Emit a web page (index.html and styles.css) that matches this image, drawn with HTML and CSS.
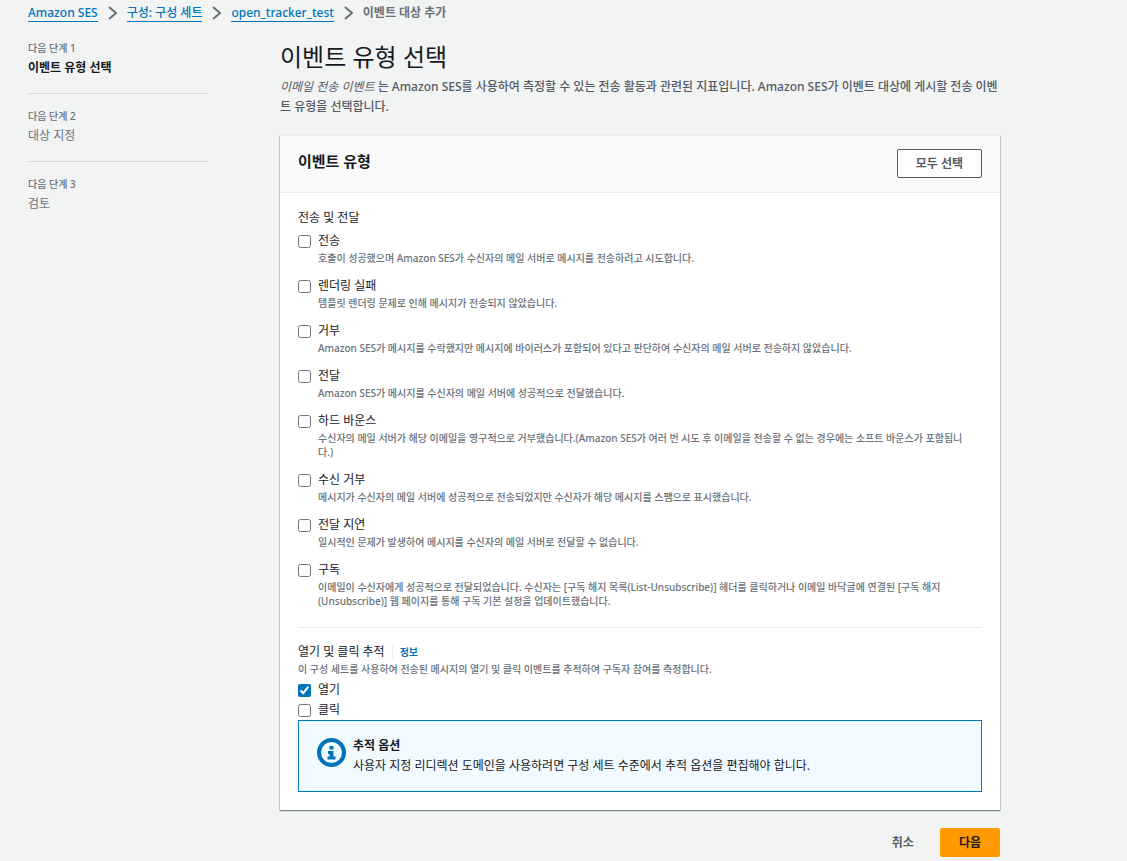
FILE: index.html
```html
<!DOCTYPE html>
<html lang="ko">
<head>
<meta charset="utf-8">
<meta name="viewport" content="width=device-width, initial-scale=1">
<title>이벤트 대상 추가</title>
<link rel="stylesheet" href="styles.css">
</head>
<body>
<nav class="breadcrumb" aria-label="탐색 경로">
  <a href="#">Amazon SES</a>
  <svg class="chevron" viewBox="0 0 9 14" aria-hidden="true"><path d="M1 1l7 6-7 6"/></svg>
  <a href="#">구성: 구성 세트</a>
  <svg class="chevron" viewBox="0 0 9 14" aria-hidden="true"><path d="M1 1l7 6-7 6"/></svg>
  <a href="#">open_tracker_test</a>
  <svg class="chevron" viewBox="0 0 9 14" aria-hidden="true"><path d="M1 1l7 6-7 6"/></svg>
  <span class="current">이벤트 대상 추가</span>
</nav>
<div class="layout">
  <ol class="steps">
    <li class="step active"><span class="step-label">다음 단계 1</span><span class="step-title">이벤트 유형 선택</span></li>
    <li class="step"><span class="step-label">다음 단계 2</span><span class="step-title">대상 지정</span></li>
    <li class="step"><span class="step-label">다음 단계 3</span><span class="step-title">검토</span></li>
  </ol>
  <main>
    <h1>이벤트 유형 선택</h1>
    <p class="intro"><em>이메일 전송 이벤트</em> 는 Amazon SES를 사용하여 측정할 수 있는 전송 활동과 관련된 지표입니다. Amazon SES가 이벤트 대상에 게시할 전송 이벤트 유형을 선택합니다.</p>
    <form>
      <section class="card">
        <header class="card-header">
          <h2>이벤트 유형</h2>
          <button type="button" class="button">모두 선택</button>
        </header>
        <div class="card-body">
          <h3>전송 및 전달</h3>
          <div class="options">
            <div class="option">
              <input type="checkbox" id="send"><label for="send">전송</label>
              <p>호출이 성공했으며 Amazon SES가 수신자의 메일 서버로 메시지를 전송하려고 시도합니다.</p>
            </div>
            <div class="option">
              <input type="checkbox" id="render"><label for="render">렌더링 실패</label>
              <p>템플릿 렌더링 문제로 인해 메시지가 전송되지 않았습니다.</p>
            </div>
            <div class="option">
              <input type="checkbox" id="reject"><label for="reject">거부</label>
              <p>Amazon SES가 메시지를 수락했지만 메시지에 바이러스가 포함되어 있다고 판단하여 수신자의 메일 서버로 전송하지 않았습니다.</p>
            </div>
            <div class="option">
              <input type="checkbox" id="delivery"><label for="delivery">전달</label>
              <p>Amazon SES가 메시지를 수신자의 메일 서버에 성공적으로 전달했습니다.</p>
            </div>
            <div class="option">
              <input type="checkbox" id="bounce"><label for="bounce">하드 바운스</label>
              <p>수신자의 메일 서버가 해당 이메일을 영구적으로 거부했습니다.(Amazon SES가 여러 번 시도 후 이메일을 전송할 수 없는 경우에는 소프트 바운스가 포함됩니다.)</p>
            </div>
            <div class="option">
              <input type="checkbox" id="complaint"><label for="complaint">수신 거부</label>
              <p>메시지가 수신자의 메일 서버에 성공적으로 전송되었지만 수신자가 해당 메시지를 스팸으로 표시했습니다.</p>
            </div>
            <div class="option">
              <input type="checkbox" id="delay"><label for="delay">전달 지연</label>
              <p>일시적인 문제가 발생하여 메시지를 수신자의 메일 서버로 전달할 수 없습니다.</p>
            </div>
            <div class="option">
              <input type="checkbox" id="subscription"><label for="subscription">구독</label>
              <p>이메일이 수신자에게 성공적으로 전달되었습니다. 수신자는 [구독 해지 목록(List-Unsubscribe)] 헤더를 클릭하거나 이메일 바닥글에 연결된 [구독 해지(Unsubscribe)] 웹 페이지를 통해 구독 기본 설정을 업데이트했습니다.</p>
            </div>
          </div>
          <div class="tracking">
            <div class="tracking-head"><h3>열기 및 클릭 추적</h3><a class="info" href="#">정보</a></div>
            <p class="hint">이 구성 세트를 사용하여 전송된 메시지의 열기 및 클릭 이벤트를 추적하여 구독자 참여를 측정합니다.</p>
            <div class="option"><input type="checkbox" id="open" checked><label for="open">열기</label></div>
            <div class="option"><input type="checkbox" id="click"><label for="click">클릭</label></div>
            <div class="alert">
              <svg class="alert-icon" viewBox="0 0 29 29" aria-hidden="true"><circle cx="14.5" cy="14.5" r="12.5"/><path d="M12.5 8h4v3.500h-4zM11 13h5.500v5.500h2v3h-8v-3h2v-2.500h-1.500z"/></svg>
              <div><strong>추적 옵션</strong><p>사용자 지정 리디렉션 도메인을 사용하려면 구성 세트 수준에서 추적 옵션을 편집해야 합니다.</p></div>
            </div>
          </div>
        </div>
      </section>
      <div class="actions">
        <button type="button" class="button link">취소</button>
        <button type="submit" class="button primary">다음</button>
      </div>
    </form>
  </main>
</div>
</body>
</html>
```
FILE: styles.css
```css
* {
  box-sizing: border-box;
}

body {
  margin: 0;
  padding: 3px 28px 4px;
  background: #f2f3f3;
  color: #16191f;
  font: 400 12px/20px "Noto Sans", "Noto Sans CJK KR", sans-serif;
}

h1, h2, h3, p, ol {
  margin: 0;
  padding: 0;
  font-weight: 400;
}

.breadcrumb {
  display: flex;
  align-items: center;
  gap: 10px;
  height: 20px;
  font-weight: 500;
}

.breadcrumb a {
  color: #0073bb;
  line-height: 16px;
  text-decoration: none;
  border-bottom: 1px solid #0073bb;
}

.chevron {
  width: 9px;
  height: 14px;
  fill: none;
  stroke: #687078;
  stroke-width: 2;
}

.current {
  color: #687078;
  font-weight: 700;
}

.layout {
  display: grid;
  grid-template-columns: 180px minmax(0, 720px);
  gap: 72px;
  margin-top: 15px;
}

.steps {
  list-style: none;
}

.step {
  display: flex;
  flex-direction: column;
  padding: 12px 0 15px;
  border-bottom: 1px solid #d5dbdb;
  color: #687078;
}

.step:first-child {
  padding-top: 0;
}

.step:last-child {
  border-bottom: 0;
}

.step-label {
  font-size: 10px;
  font-weight: 500;
}

.active .step-title {
  color: #16191f;
  font-weight: 700;
}

h1 {
  padding-top: 4px;
  font-size: 24px;
  line-height: 30px;
}

.intro {
  margin: 5px 0 18px;
  color: #545b64;
  font-weight: 500;
}

.intro em {
  font-weight: 400;
}

.card {
  background: #fff;
  border-top: 1px solid #eaeded;
  box-shadow: 0 1px 1px 0 rgba(0, 28, 36, 0.3), 1px 1px 1px 0 rgba(0, 28, 36, 0.15), -1px 1px 1px 0 rgba(0, 28, 36, 0.15);
}

.card-header {
  display: flex;
  justify-content: space-between;
  align-items: flex-start;
  padding: 13px 18px 14px;
  background: #fafafa;
  border-bottom: 1px solid #eaeded;
}

h2 {
  font-size: 15px;
  font-weight: 700;
  line-height: 24px;
}

.button {
  height: 29px;
  padding: 0 18px;
  background: #fff;
  border: 1px solid #545b64;
  border-radius: 2px;
  color: #545b64;
  font: inherit;
  font-weight: 700;
}

.button.link {
  background: transparent;
  border-color: transparent;
}

.button.primary {
  background: #ff9900;
  border-color: #ff9900;
  color: #16191f;
}

.card-body {
  padding: 15px 18px 18px;
}

h3 {
  font-size: 12px;
}

.options {
  display: flex;
  flex-direction: column;
  gap: 11px;
  padding: 3px 0 19px;
  border-bottom: 1px solid #eaeded;
}

.option {
  display: grid;
  grid-template-columns: 13px minmax(0, 1fr);
  column-gap: 7px;
}

.option input {
  width: 13px;
  height: 13px;
  margin: 4px 0 0;
  accent-color: #0073bb;
}

.option p {
  grid-column: 2;
  padding-right: 12px;
}

.option p,
.hint {
  color: #687078;
  font-size: 10px;
  font-weight: 500;
  line-height: 14px;
}

.tracking {
  padding-top: 14px;
}

.tracking-head {
  display: flex;
  align-items: center;
  gap: 7px;
}

.info {
  padding-left: 7px;
  border-left: 1px solid #eaeded;
  color: #0073bb;
  font-size: 10px;
  font-weight: 700;
  line-height: 14px;
  text-decoration: none;
}

.hint {
  margin-bottom: 4px;
}

.alert {
  display: flex;
  align-items: flex-start;
  gap: 7px;
  padding: 15px 18px;
  background: #f1faff;
  border: 1px solid #0073bb;
}

.alert-icon {
  flex: none;
  width: 29px;
  height: 29px;
  margin-top: 2px;
  fill: #0073bb;
}

.alert-icon circle {
  fill: none;
  stroke: #0073bb;
  stroke-width: 4;
}

.actions {
  display: flex;
  justify-content: flex-end;
  gap: 7px;
  margin-top: 18px;
}
```
